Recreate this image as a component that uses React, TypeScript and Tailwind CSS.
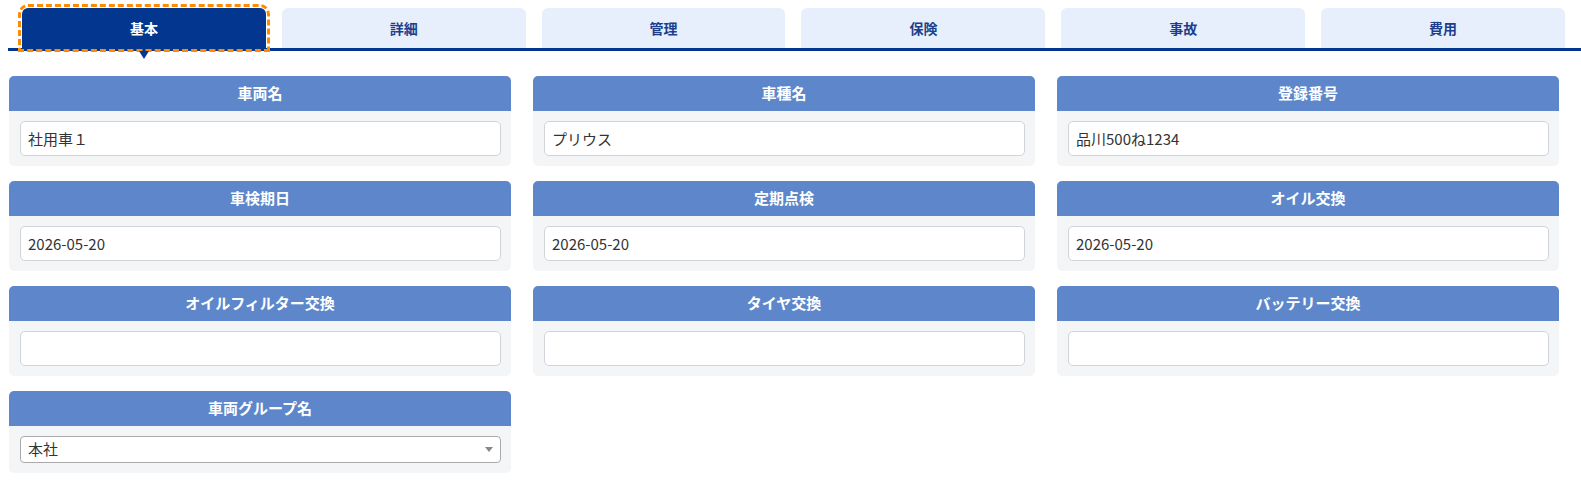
import React from 'react';

const tabs = ['基本', '詳細', '管理', '保険', '事故', '費用'];

type Field = { label: string; value: string; select?: boolean };

const fields: Field[] = [
  { label: '車両名', value: '社用車１' },
  { label: '車種名', value: 'プリウス' },
  { label: '登録番号', value: '品川500ね1234' },
  { label: '車検期日', value: '2026-05-20' },
  { label: '定期点検', value: '2026-05-20' },
  { label: 'オイル交換', value: '2026-05-20' },
  { label: 'オイルフィルター交換', value: '' },
  { label: 'タイヤ交換', value: '' },
  { label: 'バッテリー交換', value: '' },
  { label: '車両グループ名', value: '本社', select: true },
];

const FieldCard = ({ field }: { field: Field }) => (
  <div className="overflow-hidden rounded-[5px]">
    <div className="flex h-[35px] items-center justify-center bg-[#5d87ca] text-[15px] font-bold text-white">
      {field.label}
    </div>
    <div className="bg-[#f4f5f7] py-[10px] pl-[11px] pr-[10px]">
      {field.select ? (
        <div className="relative">
          <select
            defaultValue={field.value}
            className="block h-[27px] w-full appearance-none rounded-[4px] border border-[#aaaaaa] bg-white pl-[7px] text-[15px] text-[#333] outline-none"
          >
            <option>{field.value}</option>
          </select>
          <span className="pointer-events-none absolute right-[8px] top-[11px] border-x-[4px] border-t-[5px] border-x-transparent border-t-[#888]" />
        </div>
      ) : (
        <input
          readOnly
          defaultValue={field.value}
          className="block h-[35px] w-full rounded-[5px] border border-[#d0d3d8] bg-white pl-[7px] text-[15px] text-[#333] outline-none"
        />
      )}
    </div>
  </div>
);

export default function App() {
  return (
    <div className="min-h-[481px] w-full bg-white font-['Noto_Sans_CJK_JP','Noto_Sans',sans-serif]">
      <div className="ml-2 border-b-[3px] border-[#03378f] pt-2">
        <div className="flex gap-4 pl-[14px] pr-[16px]">
          {tabs.map((t, i) =>
            i === 0 ? (
              <div
                key={t}
                className="relative flex h-[40px] flex-1 items-center justify-center rounded-t-md bg-[#03378f] text-[14px] font-bold text-white outline-3 outline-offset-1 outline-dashed outline-[#ff8a00]"
              >
                {t}
                <span className="absolute left-1/2 top-full mt-[3px] -translate-x-1/2 border-x-[5px] border-t-[8px] border-x-transparent border-t-[#03378f]" />
              </div>
            ) : (
              <div
                key={t}
                className="flex h-[40px] flex-1 items-center justify-center rounded-t-md bg-[#e7effc] text-[14px] font-bold text-[#1b3f8c]"
              >
                {t}
              </div>
            ),
          )}
        </div>
      </div>
      <div className="mt-[25px] grid grid-cols-3 gap-x-[22px] gap-y-[15px] pb-2 pl-[9px] pr-[22px]">
        {fields.map((f) => (
          <FieldCard key={f.label} field={f} />
        ))}
      </div>
    </div>
  );
}
